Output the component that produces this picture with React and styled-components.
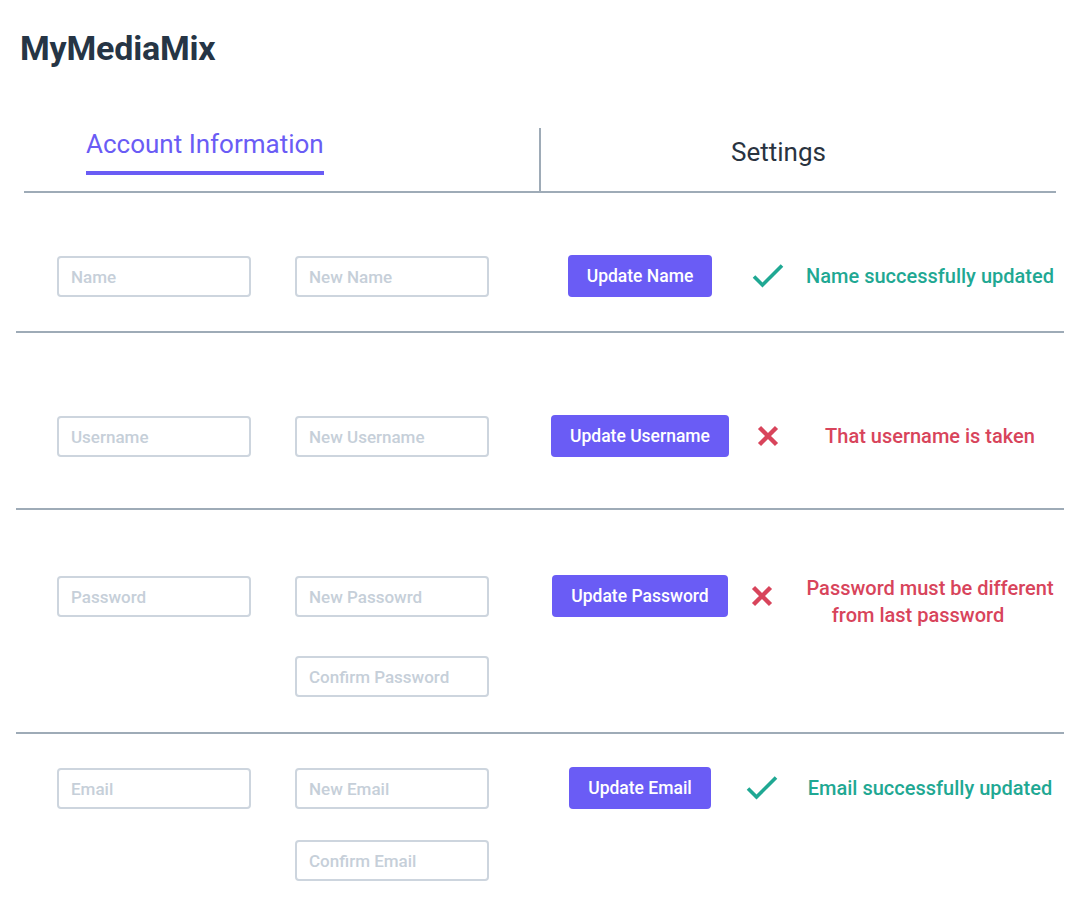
import React from "react";
import styled, { createGlobalStyle } from "styled-components";

const GlobalStyle = createGlobalStyle`
  *, *::before, *::after { box-sizing: border-box; }
  body {
    margin: 0;
    background: #ffffff;
    font-family: Roboto, "Liberation Sans", Arial, sans-serif;
    color: #263545;
  }
`;

const Page = styled.div`
  width: 1080px;
  min-height: 924px;
  display: flex;
  flex-direction: column;
`;

const Brand = styled.h1`
  margin: 28px 0 0 20px;
  font-size: 34px;
  font-weight: 700;
  line-height: normal;
  color: #263545;
  letter-spacing: -0.2px;
`;

const TabBar = styled.nav`
  margin: 60px 24px 0;
  height: 65px;
  display: flex;
  border-bottom: 2px solid #9eabb7;
`;

const Tab = styled.div`
  flex: ${(p) => (p.$first ? "0 0 517px" : "1 1 auto")};
  padding: ${(p) => (p.$first ? "1px 0 0 62px" : "9px 0 0 190px")};
  border-right: ${(p) => (p.$first ? "2px solid #9eabb7" : "none")};
`;

const TabLabel = styled.span`
  display: inline-block;
  font-size: 26px;
  font-weight: 400;
  line-height: normal;
  color: ${(p) => (p.$active ? "#6a5cf5" : "#29333f")};
  padding-bottom: ${(p) => (p.$active ? "12px" : "0")};
  border-bottom: ${(p) => (p.$active ? "4px solid #6a5cf5" : "none")};
`;

const Section = styled.section`
  margin: 0 16px;
  padding: ${(p) => p.$pad};
  padding-left: 41px;
  display: flex;
  align-items: flex-start;
  border-bottom: ${(p) => (p.$last ? "none" : "2px solid #9eabb7")};
`;

const FieldColumn = styled.div`
  width: 194px;
  margin-left: ${(p) => (p.$second ? "44px" : "0")};
  padding-top: 1px;
  display: flex;
  flex-direction: column;
  gap: ${(p) => p.$gap || 0}px;
`;

const TextInput = styled.input`
  width: 194px;
  height: 41px;
  padding: 0 12px;
  border: 2px solid #cdd5de;
  border-radius: 4px;
  background: #fff;
  font-family: Roboto, "Liberation Sans", Arial, sans-serif;
  font-size: 17px;
  font-weight: 500;
  color: #263545;
  outline: none;
  &::placeholder {
    color: #c6cfd9;
    opacity: 1;
  }
`;

const ActionCell = styled.div`
  width: 220px;
  margin-left: 41px;
  display: flex;
  justify-content: center;
`;

const UpdateButton = styled.button`
  height: 42px;
  padding: 0 19px;
  border: none;
  border-radius: 4px;
  background: #6a5cf5;
  color: #ffffff;
  font-family: Roboto, "Liberation Sans", Arial, sans-serif;
  font-size: 17.5px;
  font-weight: 500;
  cursor: pointer;
`;

const IconCell = styled.div`
  width: 36px;
  height: 42px;
  margin-left: ${(p) => p.$shift || 0}px;
  margin-right: ${(p) => -(p.$shift || 0)}px;
  display: flex;
  align-items: center;
  justify-content: center;
  flex: 0 0 auto;
`;

const Message = styled.div`
  flex: 1 1 auto;
  min-height: 42px;
  padding-left: 10px;
  display: flex;
  align-items: center;
  justify-content: center;
  text-align: center;
  font-size: 20px;
  font-weight: 500;
  line-height: 27px;
  color: ${(p) => (p.$ok ? "#1fa893" : "#d8445b")};
`;

const MessageLine = styled.div`
  padding-right: ${(p) => p.$indent || 0}px;
`;

const CheckIcon = () => (
  <svg width="32" height="26" viewBox="0 0 32 26" aria-hidden="true">
    <polyline
      points="2,13.5 10.5,22 30,2.5"
      fill="none"
      stroke="#1fa893"
      strokeWidth="3.6"
    />
  </svg>
);

const CrossIcon = () => (
  <svg width="24" height="24" viewBox="0 0 24 24" aria-hidden="true">
    <path
      d="M3.5 3.5 L20.5 20.5 M20.5 3.5 L3.5 20.5"
      fill="none"
      stroke="#d8445b"
      strokeWidth="4.4"
    />
  </svg>
);

const rows = [
  {
    fields: ["Name"],
    extra: ["New Name"],
    button: "Update Name",
    ok: true,
    message: ["Name successfully updated"],
    pad: "62px 0 34px",
  },
  {
    fields: ["Username"],
    extra: ["New Username"],
    button: "Update Username",
    ok: false,
    message: ["That username is taken"],
    pad: "82px 0 51px",
  },
  {
    fields: ["Password"],
    extra: ["New Passowrd", "Confirm Password"],
    gap: 39,
    button: "Update Password",
    ok: false,
    shift: -6,
    message: ["Password must be different", "from last password"],
    indents: [0, 24],
    pad: "65px 0 35px",
  },
  {
    fields: ["Email"],
    extra: ["New Email", "Confirm Email"],
    gap: 31,
    button: "Update Email",
    ok: true,
    shift: -6,
    message: ["Email successfully updated"],
    pad: "33px 0 20px",
    last: true,
  },
];

export default function App() {
  return (
    <>
      <GlobalStyle />
      <Page>
        <Brand>MyMediaMix</Brand>
        <TabBar>
          <Tab $first>
            <TabLabel $active>Account Information</TabLabel>
          </Tab>
          <Tab>
            <TabLabel>Settings</TabLabel>
          </Tab>
        </TabBar>
        {rows.map((r) => (
          <Section key={r.button} $pad={r.pad} $last={r.last}>
            <FieldColumn>
              {r.fields.map((f) => (
                <TextInput key={f} placeholder={f} />
              ))}
            </FieldColumn>
            <FieldColumn $second $gap={r.gap}>
              {r.extra.map((f) => (
                <TextInput key={f} placeholder={f} />
              ))}
            </FieldColumn>
            <ActionCell>
              <UpdateButton>{r.button}</UpdateButton>
            </ActionCell>
            <IconCell $shift={r.shift}>{r.ok ? <CheckIcon /> : <CrossIcon />}</IconCell>
            <Message $ok={r.ok}>
              <div>
                {r.message.map((m, i) => (
                  <MessageLine key={i} $indent={r.indents ? r.indents[i] : 0}>
                    {m}
                  </MessageLine>
                ))}
              </div>
            </Message>
          </Section>
        ))}
      </Page>
    </>
  );
}
